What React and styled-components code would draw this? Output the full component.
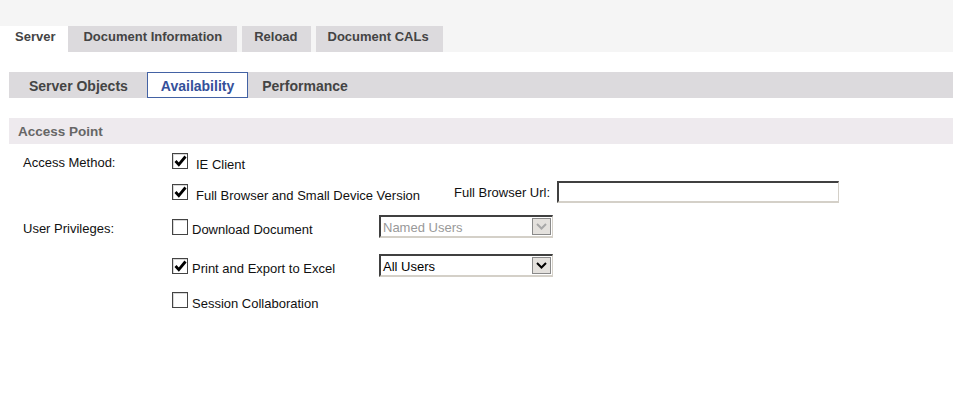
import styled, { createGlobalStyle } from "styled-components";

const GlobalStyle = createGlobalStyle`
  body {
    margin: 0;
    background: #fff;
    font-family: "Liberation Sans", Arial, sans-serif;
    font-size: 13px;
    color: #111;
  }
`;

const TopBar = styled.div`
  height: 52px;
  background: #f5f5f5;
  display: flex;
  align-items: flex-end;
`;

const MainTab = styled.div`
  height: 26px;
  box-sizing: border-box;
  padding: 2px ${(p) => p.$pr}px 0 ${(p) => p.$pl}px;
  margin-left: ${(p) => p.$ml}px;
  line-height: 18px;
  font-weight: bold;
  color: #444;
  background: ${(p) => (p.$active ? "#fff" : "#dcdadd")};
`;

const Page = styled.div`
  padding: 20px 0 0 9px;
`;

const SubTabBar = styled.div`
  height: 26px;
  background: #dcdadd;
  display: flex;
  align-items: stretch;
`;

const SubTab = styled.div`
  box-sizing: border-box;
  display: flex;
  align-items: center;
  padding: 1px 13px 0;
  font-size: 14px;
  font-weight: bold;
  color: ${(p) => (p.$active ? "#34509a" : "#444")};
  background: ${(p) => (p.$active ? "#fff" : "transparent")};
  border: 1px solid ${(p) => (p.$active ? "#4362a4" : "transparent")};
  margin-left: ${(p) => p.$offset || 0}px;
`;

const SectionHeader = styled.div`
  margin-top: 20px;
  height: 26px;
  background: #eeeaee;
  display: flex;
  align-items: center;
  padding-left: 9px;
  font-size: 13.5px;
  font-weight: bold;
  color: #666;
`;

const Form = styled.div`
  padding: 7px 0 0 14px;
`;

const Row = styled.div`
  display: flex;
  align-items: center;
  height: ${(p) => p.$h}px;
  margin-top: ${(p) => p.$mt || 0}px;
`;

const FieldLabel = styled.div`
  width: 149px;
  flex: none;
  padding-top: 3px;
`;

const CheckItem = styled.label`
  display: flex;
  align-items: center;
  gap: ${(p) => p.$gap}px;
  width: ${(p) => (p.$w ? `${p.$w}px` : "auto")};
  flex: none;
`;

const Box = styled.span`
  width: 16px;
  height: 16px;
  box-sizing: border-box;
  border: 1px solid #444;
  box-shadow: inset 1px 1px 0 #d8d8d8;
  background: #fff;
  display: flex;
  align-items: center;
  justify-content: center;
`;

const CheckText = styled.span`
  padding-top: 6px;
`;

const UrlLabel = styled.span`
  padding-top: 1px;
  margin-right: 7px;
`;

const Inset = styled.div`
  box-sizing: border-box;
  width: ${(p) => p.$w}px;
  height: ${(p) => p.$h}px;
  border-top: 2px solid #404040;
  border-left: 2px solid #404040;
  border-right: 1px solid #d4d0c8;
  border-bottom: 2px solid #d4d0c8;
  background: #fff;
  display: flex;
  align-items: center;
  flex: none;
`;

const SelectText = styled.span`
  flex: 1;
  padding-left: 2px;
  padding-top: 1px;
  color: ${(p) => (p.$disabled ? "#999" : "#000")};
`;

const DropButton = styled.span`
  width: 19px;
  height: 17px;
  box-sizing: border-box;
  border: 1px solid #8a8a8a;
  background: #e4e1dd;
  margin-right: 1px;
  display: flex;
  align-items: center;
  justify-content: center;
`;

function Check({ checked }) {
  return (
    <Box>
      {checked && (
        <svg width="13" height="12" viewBox="0 0 13 12">
          <path
            d="M1.5 6 L4.8 9.6 L11.5 1.5"
            fill="none"
            stroke="#000"
            strokeWidth="2.8"
          />
        </svg>
      )}
    </Box>
  );
}

function Select({ value, disabled }) {
  return (
    <Inset $w={174} $h={23}>
      <SelectText $disabled={disabled}>{value}</SelectText>
      <DropButton>
        <svg width="11" height="7" viewBox="0 0 11 7">
          <path
            d="M1 1 L5.5 5.5 L10 1"
            fill="none"
            stroke={disabled ? "#a8a8a8" : "#000"}
            strokeWidth="2"
          />
        </svg>
      </DropButton>
    </Inset>
  );
}

export default function App() {
  return (
    <>
      <GlobalStyle />
      <TopBar>
        <MainTab $active $pl={15} $pr={13} $ml={0}>
          Server
        </MainTab>
        <MainTab $pl={15} $pr={15} $ml={0}>
          Document Information
        </MainTab>
        <MainTab $pl={12} $pr={13} $ml={5}>
          Reload
        </MainTab>
        <MainTab $pl={12} $pr={14} $ml={5}>
          Document CALs
        </MainTab>
      </TopBar>
      <Page>
        <SubTabBar>
          <SubTab $offset={6}>Server Objects</SubTab>
          <SubTab $active $offset={5}>
            Availability
          </SubTab>
          <SubTab>Performance</SubTab>
        </SubTabBar>
        <SectionHeader>Access Point</SectionHeader>
        <Form>
          <Row $h={20}>
            <FieldLabel>Access Method:</FieldLabel>
            <CheckItem $gap={8}>
              <Check checked />
              <CheckText>IE Client</CheckText>
            </CheckItem>
          </Row>
          <Row $h={22} $mt={10}>
            <FieldLabel />
            <CheckItem $gap={8} $w={282}>
              <Check checked />
              <CheckText>Full Browser and Small Device Version</CheckText>
            </CheckItem>
            <UrlLabel>Full Browser Url:</UrlLabel>
            <Inset $w={282} $h={22} />
          </Row>
          <Row $h={23} $mt={12}>
            <FieldLabel>User Privileges:</FieldLabel>
            <CheckItem $gap={4} $w={207}>
              <Check />
              <CheckText>Download Document</CheckText>
            </CheckItem>
            <Select value="Named Users" disabled />
          </Row>
          <Row $h={23} $mt={16}>
            <FieldLabel />
            <CheckItem $gap={4} $w={207}>
              <Check checked />
              <CheckText>Print and Export to Excel</CheckText>
            </CheckItem>
            <Select value="All Users" />
          </Row>
          <Row $h={20} $mt={13}>
            <FieldLabel />
            <CheckItem $gap={4}>
              <Check />
              <CheckText>Session Collaboration</CheckText>
            </CheckItem>
          </Row>
        </Form>
      </Page>
    </>
  );
}
